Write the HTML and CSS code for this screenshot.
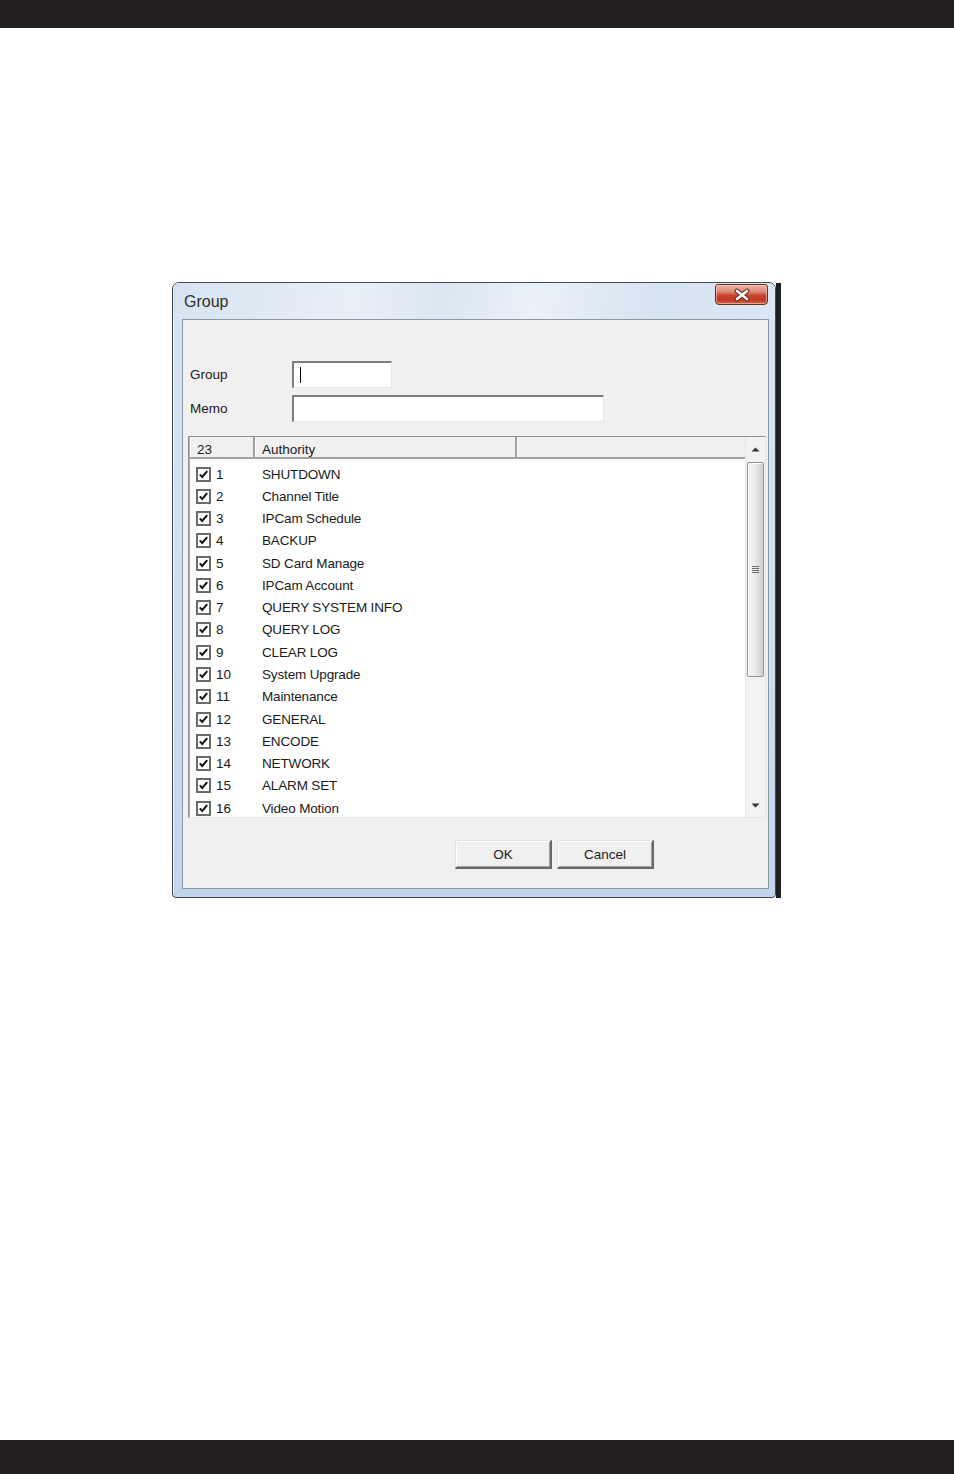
FILE: index.html
```html
<!DOCTYPE html>
<html>
<head>
<meta charset="utf-8">
<title>Group</title>
<link rel="stylesheet" href="styles.css">
</head>
<body>
<div class="topbar"></div>
<div class="page">
  <div class="win">
    <div class="frame">
      <div class="titlebar">
        <span class="title">Group</span>
        <div class="close">
          <svg width="20" height="14" viewBox="-10 -7 20 14">
            <path d="M-5 -4 L5 4 M5 -4 L-5 4" stroke="#5a2a22" stroke-width="4.6" stroke-linecap="round"/>
            <path d="M-5 -4 L5 4 M5 -4 L-5 4" stroke="#ffffff" stroke-width="2.6" stroke-linecap="round"/>
          </svg>
        </div>
      </div>
      <div class="client">
        <div class="form">
          <div class="field">
            <span class="label">Group</span>
            <div class="input input-short"><span class="caret"></span></div>
          </div>
          <div class="field">
            <span class="label">Memo</span>
            <div class="input input-long"></div>
          </div>
        </div>
        <div class="list">
          <div class="list-main">
            <div class="header">
              <div class="hcell hc1">23</div>
              <div class="hcell hc2">Authority</div>
              <div class="hcell hc3"></div>
            </div>
            <div class="rows">
              <div class="row"><div class="c1"><span class="cb"><svg width="15" height="15" viewBox="0 0 15 15"><rect x="1" y="1" width="13" height="13" fill="#fff" stroke="#6a6a6a" stroke-width="2"/><path d="M3.8 7.4 L6.2 10 L11.2 4.2" fill="none" stroke="#111" stroke-width="2"/></svg></span><span class="num">1</span></div><div class="c2">SHUTDOWN</div></div>
              <div class="row"><div class="c1"><span class="cb"><svg width="15" height="15" viewBox="0 0 15 15"><rect x="1" y="1" width="13" height="13" fill="#fff" stroke="#6a6a6a" stroke-width="2"/><path d="M3.8 7.4 L6.2 10 L11.2 4.2" fill="none" stroke="#111" stroke-width="2"/></svg></span><span class="num">2</span></div><div class="c2">Channel Title</div></div>
              <div class="row"><div class="c1"><span class="cb"><svg width="15" height="15" viewBox="0 0 15 15"><rect x="1" y="1" width="13" height="13" fill="#fff" stroke="#6a6a6a" stroke-width="2"/><path d="M3.8 7.4 L6.2 10 L11.2 4.2" fill="none" stroke="#111" stroke-width="2"/></svg></span><span class="num">3</span></div><div class="c2">IPCam Schedule</div></div>
              <div class="row"><div class="c1"><span class="cb"><svg width="15" height="15" viewBox="0 0 15 15"><rect x="1" y="1" width="13" height="13" fill="#fff" stroke="#6a6a6a" stroke-width="2"/><path d="M3.8 7.4 L6.2 10 L11.2 4.2" fill="none" stroke="#111" stroke-width="2"/></svg></span><span class="num">4</span></div><div class="c2">BACKUP</div></div>
              <div class="row"><div class="c1"><span class="cb"><svg width="15" height="15" viewBox="0 0 15 15"><rect x="1" y="1" width="13" height="13" fill="#fff" stroke="#6a6a6a" stroke-width="2"/><path d="M3.8 7.4 L6.2 10 L11.2 4.2" fill="none" stroke="#111" stroke-width="2"/></svg></span><span class="num">5</span></div><div class="c2">SD Card Manage</div></div>
              <div class="row"><div class="c1"><span class="cb"><svg width="15" height="15" viewBox="0 0 15 15"><rect x="1" y="1" width="13" height="13" fill="#fff" stroke="#6a6a6a" stroke-width="2"/><path d="M3.8 7.4 L6.2 10 L11.2 4.2" fill="none" stroke="#111" stroke-width="2"/></svg></span><span class="num">6</span></div><div class="c2">IPCam Account</div></div>
              <div class="row"><div class="c1"><span class="cb"><svg width="15" height="15" viewBox="0 0 15 15"><rect x="1" y="1" width="13" height="13" fill="#fff" stroke="#6a6a6a" stroke-width="2"/><path d="M3.8 7.4 L6.2 10 L11.2 4.2" fill="none" stroke="#111" stroke-width="2"/></svg></span><span class="num">7</span></div><div class="c2">QUERY SYSTEM INFO</div></div>
              <div class="row"><div class="c1"><span class="cb"><svg width="15" height="15" viewBox="0 0 15 15"><rect x="1" y="1" width="13" height="13" fill="#fff" stroke="#6a6a6a" stroke-width="2"/><path d="M3.8 7.4 L6.2 10 L11.2 4.2" fill="none" stroke="#111" stroke-width="2"/></svg></span><span class="num">8</span></div><div class="c2">QUERY LOG</div></div>
              <div class="row"><div class="c1"><span class="cb"><svg width="15" height="15" viewBox="0 0 15 15"><rect x="1" y="1" width="13" height="13" fill="#fff" stroke="#6a6a6a" stroke-width="2"/><path d="M3.8 7.4 L6.2 10 L11.2 4.2" fill="none" stroke="#111" stroke-width="2"/></svg></span><span class="num">9</span></div><div class="c2">CLEAR LOG</div></div>
              <div class="row"><div class="c1"><span class="cb"><svg width="15" height="15" viewBox="0 0 15 15"><rect x="1" y="1" width="13" height="13" fill="#fff" stroke="#6a6a6a" stroke-width="2"/><path d="M3.8 7.4 L6.2 10 L11.2 4.2" fill="none" stroke="#111" stroke-width="2"/></svg></span><span class="num">10</span></div><div class="c2">System Upgrade</div></div>
              <div class="row"><div class="c1"><span class="cb"><svg width="15" height="15" viewBox="0 0 15 15"><rect x="1" y="1" width="13" height="13" fill="#fff" stroke="#6a6a6a" stroke-width="2"/><path d="M3.8 7.4 L6.2 10 L11.2 4.2" fill="none" stroke="#111" stroke-width="2"/></svg></span><span class="num">11</span></div><div class="c2">Maintenance</div></div>
              <div class="row"><div class="c1"><span class="cb"><svg width="15" height="15" viewBox="0 0 15 15"><rect x="1" y="1" width="13" height="13" fill="#fff" stroke="#6a6a6a" stroke-width="2"/><path d="M3.8 7.4 L6.2 10 L11.2 4.2" fill="none" stroke="#111" stroke-width="2"/></svg></span><span class="num">12</span></div><div class="c2">GENERAL</div></div>
              <div class="row"><div class="c1"><span class="cb"><svg width="15" height="15" viewBox="0 0 15 15"><rect x="1" y="1" width="13" height="13" fill="#fff" stroke="#6a6a6a" stroke-width="2"/><path d="M3.8 7.4 L6.2 10 L11.2 4.2" fill="none" stroke="#111" stroke-width="2"/></svg></span><span class="num">13</span></div><div class="c2">ENCODE</div></div>
              <div class="row"><div class="c1"><span class="cb"><svg width="15" height="15" viewBox="0 0 15 15"><rect x="1" y="1" width="13" height="13" fill="#fff" stroke="#6a6a6a" stroke-width="2"/><path d="M3.8 7.4 L6.2 10 L11.2 4.2" fill="none" stroke="#111" stroke-width="2"/></svg></span><span class="num">14</span></div><div class="c2">NETWORK</div></div>
              <div class="row"><div class="c1"><span class="cb"><svg width="15" height="15" viewBox="0 0 15 15"><rect x="1" y="1" width="13" height="13" fill="#fff" stroke="#6a6a6a" stroke-width="2"/><path d="M3.8 7.4 L6.2 10 L11.2 4.2" fill="none" stroke="#111" stroke-width="2"/></svg></span><span class="num">15</span></div><div class="c2">ALARM SET</div></div>
              <div class="row"><div class="c1"><span class="cb"><svg width="15" height="15" viewBox="0 0 15 15"><rect x="1" y="1" width="13" height="13" fill="#fff" stroke="#6a6a6a" stroke-width="2"/><path d="M3.8 7.4 L6.2 10 L11.2 4.2" fill="none" stroke="#111" stroke-width="2"/></svg></span><span class="num">16</span></div><div class="c2">Video Motion</div></div>
            </div>
          </div>
          <div class="scrollbar">
            <div class="sb-btn"><svg width="9" height="5" viewBox="0 0 9 5"><path d="M0.5 4.5 L4.5 0.5 L8.5 4.5 Z" fill="#333"/></svg></div>
            <div class="thumb">
              <div class="grip"><span></span><span></span><span></span><span></span></div>
            </div>
            <div class="sb-fill"></div>
            <div class="sb-btn"><svg width="9" height="5" viewBox="0 0 9 5"><path d="M0.5 0.5 L4.5 4.5 L8.5 0.5 Z" fill="#333"/></svg></div>
          </div>
        </div>
        <div class="buttons">
          <div class="btn">OK</div>
          <div class="btn">Cancel</div>
        </div>
      </div>
    </div>
    <div class="edge"></div>
  </div>
</div>
<div class="bottombar"></div>
</body>
</html>
```
FILE: styles.css
```css
* { box-sizing: border-box; }
html, body { margin: 0; padding: 0; background: #ffffff; }
body { font-family: "Liberation Sans", Arial, sans-serif; width: 954px; }

.topbar { height: 28px; background: #231f20; }
.bottombar { height: 34px; background: #231f20; }
.page { height: 1412px; padding: 254px 0 0 172px; }

.win { display: flex; width: 609px; height: 616px; }
.edge { width: 5px; margin-top: 1px; background: #1e1e1e; }

.frame {
  width: 604px; height: 616px;
  display: flex; flex-direction: column;
  background: linear-gradient(to bottom, #d8e5f2 0%, #cddef0 60%, #c0d5ec 100%);
  border: 1px solid #3f4a55;
  border-radius: 7px 7px 4px 4px;
  box-shadow: inset 1px 1px 0 #eef4fb;
}

.titlebar {
  height: 36px; display: flex; align-items: flex-start; justify-content: space-between;
  background: linear-gradient(100deg, #d6e3f0 0%, #e8eff7 30%, #dbe6f2 45%, #eaf1f8 60%, #d6e3f1 80%, #dbe7f3 100%);
  border-radius: 6px 6px 0 0;
}
.title { font-size: 16px; color: #2e2e2e; padding: 10px 0 0 11px; }
.close {
  width: 53px; height: 21px; margin: 1px 7px 0 0;
  display: flex; align-items: center; justify-content: center;
  background: linear-gradient(to bottom, #eab3a6 0%, #dc8a76 35%, #c8412a 55%, #c33a22 80%, #d46a4e 100%);
  border: 1px solid #6e2a1e; border-radius: 3px 3px 4px 4px;
  box-shadow: inset 0 0 0 1px rgba(255,220,210,0.5);
}

.client {
  width: 587px; height: 570px; margin-left: 9px;
  background: #f0f0f0;
  border: 1px solid #8a96a2;
  display: flex; flex-direction: column;
}

.form { padding: 41px 0 0 7px; display: flex; flex-direction: column; gap: 7px; }
.field { display: flex; align-items: center; }
.label { width: 102px; font-size: 13.5px; color: #1a1a1a; }
.input {
  height: 27px; background: #fff;
  border-style: solid; border-width: 2px 1px 1px 2px;
  border-color: #7d7d7d #e8e8e8 #e8e8e8 #7d7d7d;
  display: flex; align-items: center;
}
.input-short { width: 100px; }
.input-long { width: 312px; }
.caret { width: 1px; height: 16px; background: #000; margin-left: 6px; }

.list {
  margin: 14px 0 0 5px; width: 578px; height: 382px;
  display: flex; background: #fff;
  border-style: solid; border-width: 1px;
  border-color: #8f8f8f #e4e4e4 #e4e4e4 #8f8f8f;
  box-shadow: inset 1px 1px 0 #b0b0b0;
}
.list-main { flex: 1; display: flex; flex-direction: column; min-width: 0; padding-left: 1px; }

.header {
  height: 22px; display: flex; background: #f0f0f0;
  border-bottom: 2px solid #a0a0a0;
}
.hcell {
  font-size: 13.5px; color: #1a1a1a; line-height: 20px; padding-top: 3px;
  border-right: 2px solid #a0a0a0;
  box-shadow: inset 1px 0 0 #ffffff;
}
.hc1 { width: 65px; padding-left: 7px; }
.hc2 { width: 262px; padding-left: 7px; }
.hc3 { flex: 1; border-right: none; }

.rows { flex: 1; overflow: hidden; padding-top: 4px; }
.row { height: 22.27px; display: flex; align-items: center; font-size: 13.5px; color: #1a1a1a; letter-spacing: -0.15px; }
.c1 { width: 65px; display: flex; align-items: center; padding-left: 6px; letter-spacing: 0; }
.cb { width: 15px; height: 15px; display: block; }
.cb svg { display: block; }
.num { margin-left: 5px; }
.c2 { padding-left: 7px; }

.scrollbar {
  width: 20px; display: flex; flex-direction: column; align-items: center;
  background: #f2f2f2; border-left: 1px solid #e6e6e6;
}
.sb-btn { height: 24px; width: 100%; display: flex; align-items: center; justify-content: center; }
.thumb {
  margin-top: 1px; width: 17px; height: 215px;
  border: 1px solid #959595; border-radius: 2px;
  background: linear-gradient(to right, #f3f3f3 0%, #ececec 45%, #d9d9d9 80%, #cfcfcf 100%);
  box-shadow: inset 1px 1px 0 #ffffff;
  display: flex; align-items: center; justify-content: center;
}
.grip { display: flex; flex-direction: column; gap: 1px; }
.grip span { display: block; width: 7px; height: 1px; background: #6f6f6f; }
.sb-fill { flex: 1; }

.buttons { display: flex; gap: 5px; padding-left: 272px; margin-top: 22px; }
.btn {
  width: 97px; height: 29px;
  display: flex; align-items: center; justify-content: center;
  font-size: 13.5px; color: #1a1a1a; background: #f0f0f0;
  border-style: solid; border-width: 1px 2px 2px 1px;
  border-color: #e2e2e2 #6a6a6a #6a6a6a #e2e2e2;
  box-shadow: inset 1px 1px 0 #ffffff, inset -1px -1px 0 #a0a0a0;
}
```
